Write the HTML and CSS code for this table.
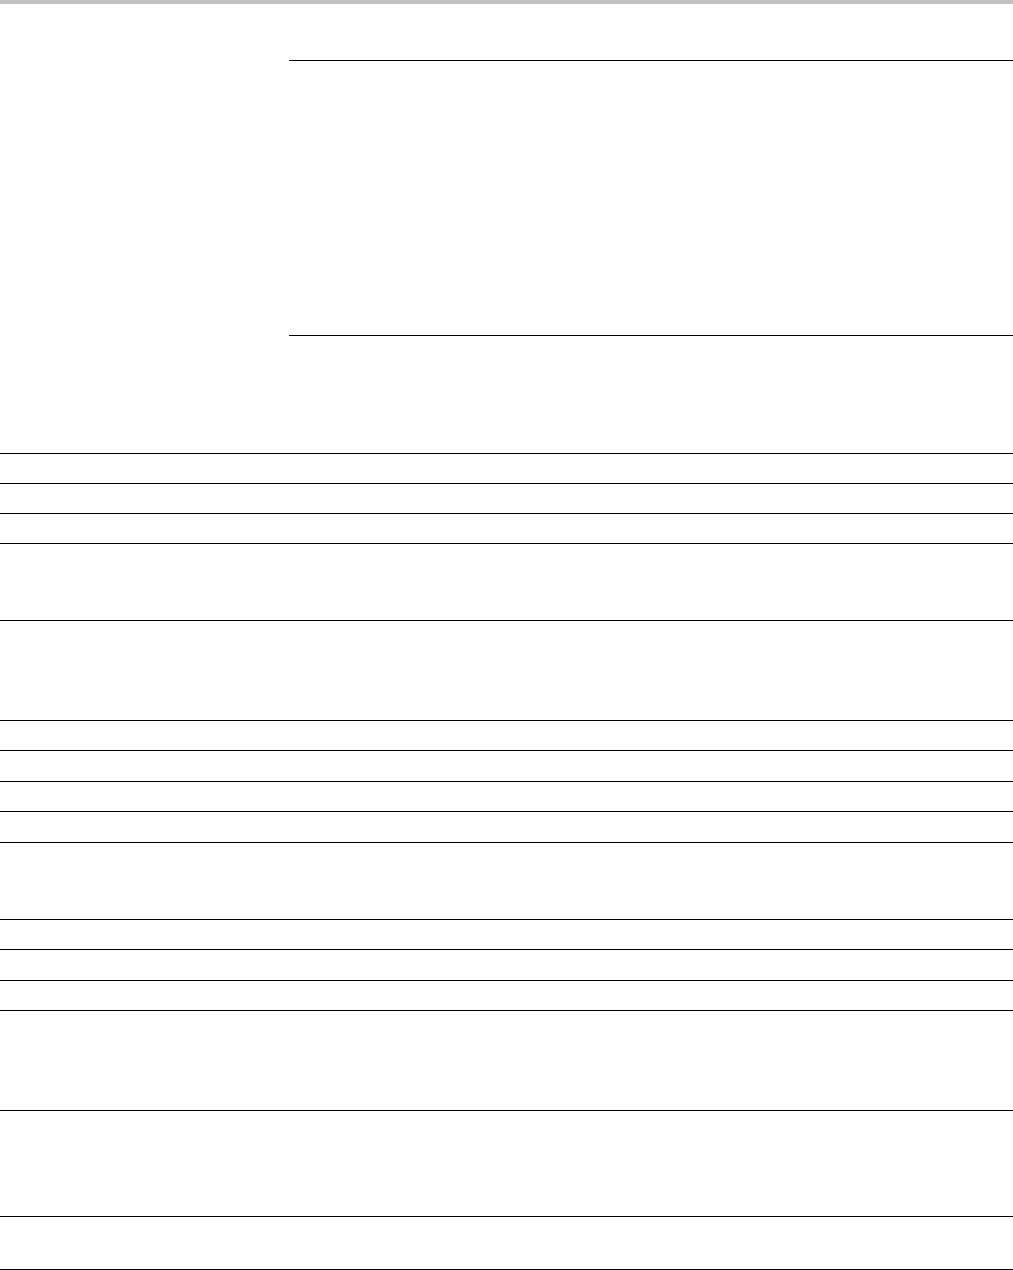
FILE: index.html
```html
<!DOCTYPE html>
<html lang="en">
<head>
<meta charset="utf-8">
<title>Document</title>
<link rel="stylesheet" href="styles.css">
</head>
<body>
<div class="topbar"></div>
<div class="figure"></div>
<div class="table">
  <div class="row h30"></div>
  <div class="row h30"></div>
  <div class="row h30"></div>
  <div class="row h77"></div>
  <div class="row h100"></div>
  <div class="row h30"></div>
  <div class="row h31"></div>
  <div class="row h30"></div>
  <div class="row h31"></div>
  <div class="row h77"></div>
  <div class="row h30"></div>
  <div class="row h31"></div>
  <div class="row h30"></div>
  <div class="row h100"></div>
  <div class="row h106"></div>
  <div class="row h53 last"></div>
</div>
</body>
</html>
```

FILE: styles.css
```css
html, body {
  margin: 0;
  padding: 0;
  background: #fff;
  font-family: "Liberation Sans", Arial, sans-serif;
}
.topbar {
  height: 4px;
  background: #c0c0c0;
}
.figure {
  margin-top: 56px;
  margin-left: 289px;
  height: 274px;
  border-top: 1px solid #000;
  border-bottom: 1px solid #000;
}
.table {
  margin-top: 117px;
}
.row {
  box-sizing: border-box;
  border-top: 1px solid #000;
}
.h30 { height: 30px; }
.h31 { height: 31px; }
.h53 { height: 53px; }
.h77 { height: 77px; }
.h100 { height: 100px; }
.h106 { height: 106px; }
.row.last {
  box-sizing: content-box;
  height: 52px;
  border-bottom: 1px solid #000;
}
```
